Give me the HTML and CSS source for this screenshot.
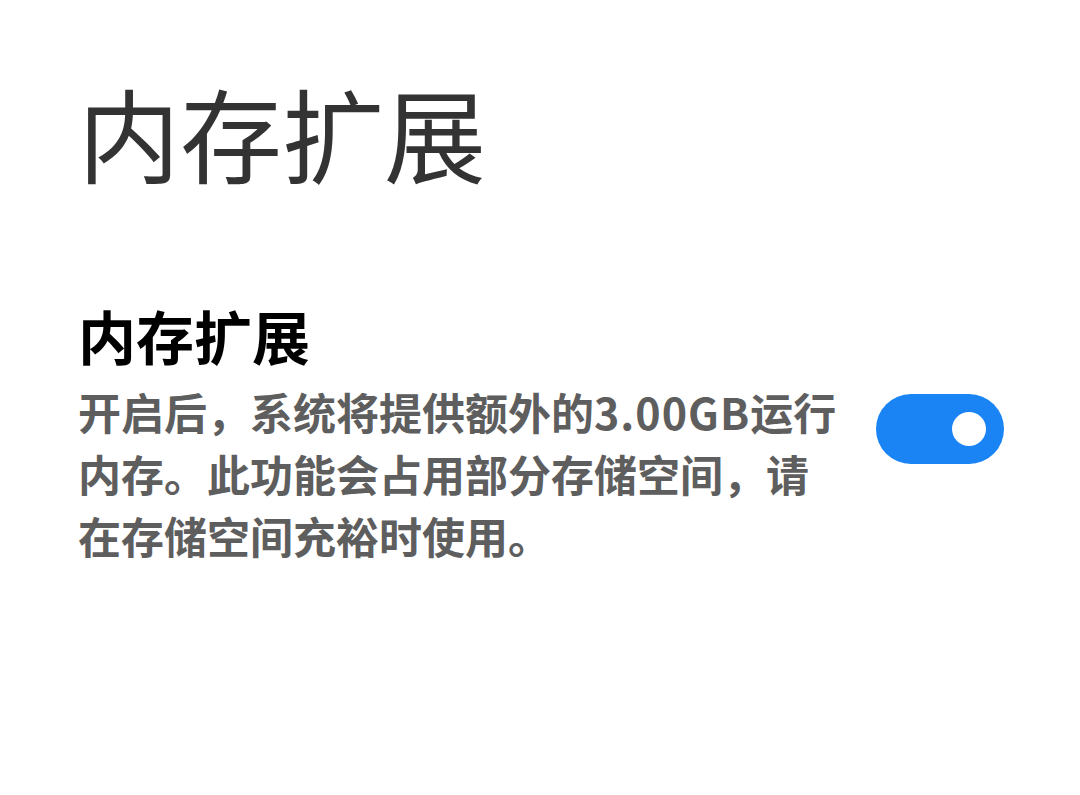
FILE: index.html
```html
<!DOCTYPE html>
<html lang="zh-CN">
<head>
    <meta charset="utf-8">
    <title>内存扩展</title>
    <link rel="stylesheet" href="styles.css">
</head>
<body>
    <div class="page">
        <h1 class="page-title">内存扩展</h1>
        <div class="setting-row">
            <div class="setting-text">
                <h2 class="setting-title">内存扩展</h2>
                <p class="setting-desc">开启后，系统将提供额外的<span class="num">3.00GB</span>运行内存。此功能会占用部分存储空间，请在存储空间充裕时使用。</p>
            </div>
            <div class="switch on">
                <span class="knob"></span>
            </div>
        </div>
    </div>
</body>
</html>
```

FILE: styles.css
```css
body {
    margin: 0;
    background: #ffffff;
    font-family: "Noto Sans CJK SC", "Noto Sans", sans-serif;
}
.page {
    padding: 72px 76px 0 78px;
}
.page-title {
    margin: 0;
    font-size: 102px;
    line-height: 120px;
    font-weight: 400;
    color: #333333;
}
.setting-row {
    display: flex;
    align-items: center;
    justify-content: space-between;
    margin-top: 103px;
}
.setting-text {
    width: 790px;
}
.setting-title {
    margin: 0 0 5px 0;
    font-size: 58px;
    line-height: 80px;
    font-weight: 700;
    color: #000000;
}
.setting-desc {
    margin: 0;
    width: 766px;
    font-size: 43px;
    line-height: 62px;
    font-weight: 700;
    color: #5e5e5e;
}
.setting-desc .num {
    letter-spacing: 1px;
}
.switch {
    width: 128px;
    height: 70px;
    border-radius: 35px;
    background: #1b84f5;
    display: flex;
    align-items: center;
    justify-content: flex-end;
    padding-right: 18px;
    box-sizing: border-box;
    margin-top: -4px;
}
.knob {
    width: 34px;
    height: 34px;
    border-radius: 50%;
    background: #ffffff;
}
```
